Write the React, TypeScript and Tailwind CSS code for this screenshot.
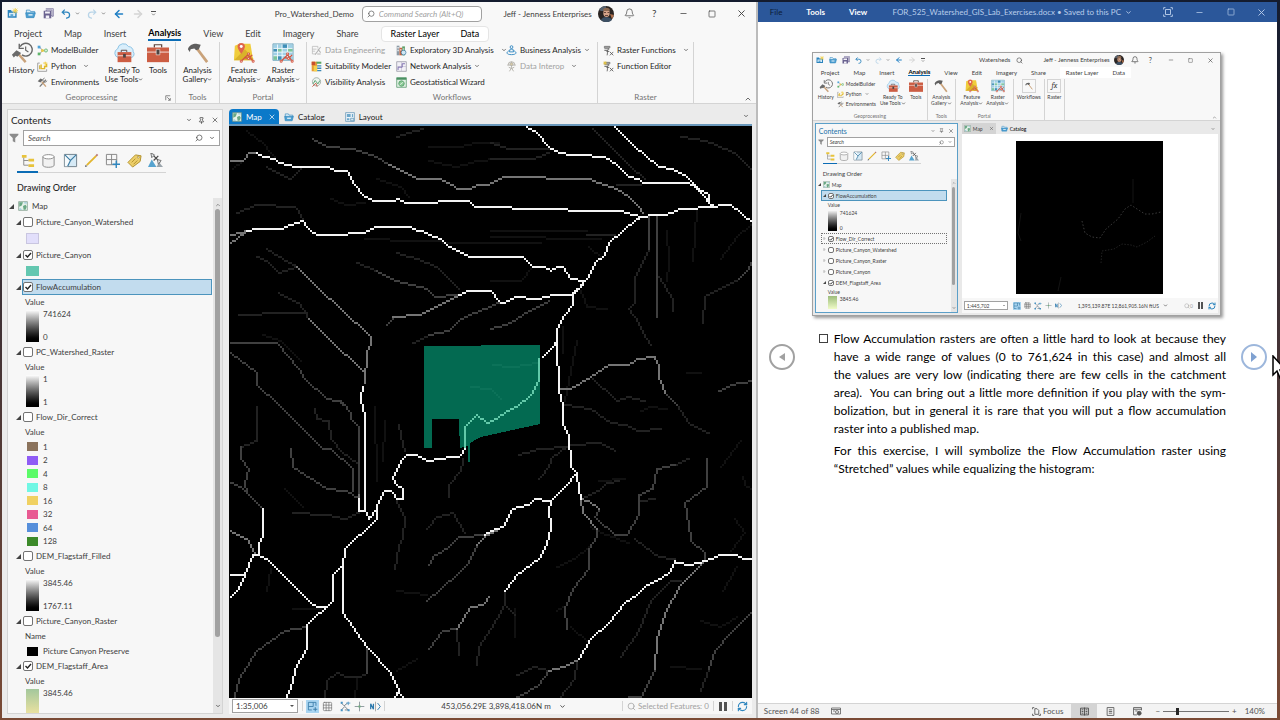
import type { ReactNode } from "react";
import {
  ArrowLeft,
  ArrowRight,
  Bell,
  ChevronDown,
  ChevronUp,
  Grid3x3,
  Minus,
  Pin,
  RefreshCw,
  Search,
  Square,
  X,
} from "lucide-react";

/* ---------- stream network ---------- */

const CELL = 2;

// walks a polyline over a 2px grid and returns one square per visited cell
function trace(line: string) {
  const pts = line.split(" ").map((p) => p.split(",").map((n) => Math.round(Number(n) / CELL)));
  const seen = new Set<string>();
  for (let i = 1; i < pts.length; i++) {
    const [x0, y0] = pts[i - 1];
    const [x1, y1] = pts[i];
    const steps = Math.max(Math.abs(x1 - x0), Math.abs(y1 - y0), 1);
    for (let s = 0; s <= steps; s++) {
      const x = Math.round(x0 + ((x1 - x0) * s) / steps);
      const y = Math.round(y0 + ((y1 - y0) * s) / steps);
      seen.add(`M${x * CELL} ${y * CELL}h2v2h-2z`);
    }
  }
  return [...seen].join("");
}

const STREAMS: { color: string; lines: string[] }[] = [
  {
    color: "#111111",
    lines: [
      "428,145 458,146 475,142 498,142",
      "428,160 455,165 475,160 498,158",
      "364,238 468,241 540,242",
      "490,229 585,229",
      "490,236 600,238",
      "588,245 600,255",
      "245,130 262,142 278,162",
      "231,168 243,158",
      "330,198 345,204 363,202",
      "375,177 400,186 407,196",
      "490,279 520,279 530,268",
      "261,334 280,340 300,360",
      "291,608 320,608",
      "283,488 301,505",
      "270,568 266,590",
      "395,670 415,658",
      "395,590 425,594",
      "598,480 623,478",
      "665,230 668,260 665,280",
      "720,258 735,235 752,221",
      "695,208 692,260",
      "720,465 740,440",
      "733,517 743,532 730,550",
      "741,475 744,483 750,488",
      "722,590 735,565",
      "563,400 575,340",
      "562,325 562,352",
      "580,290 585,306 605,307",
      "640,410 650,405 665,407",
      "627,542 605,533 590,525",
      "555,565 575,556 588,546",
      "555,610 565,603",
      "570,625 585,640",
      "355,678 354,697",
      "513,607 514,635",
      "700,620 720,625 735,615",
      "670,665 700,667",
      "685,371 700,372",
      "373,405 376,480",
      "383,420 382,460",
    ],
  },
  {
    color: "#222222",
    lines: [
      "255,255 265,260 278,272 296,266",
      "238,314 255,314 265,312 305,312",
      "278,292 298,302 308,318",
      "265,248 281,257 296,266",
      "235,212 245,208 255,203 293,205 298,210 301,219",
      "265,165 278,172 290,177 300,167",
      "395,135 408,131 421,128",
      "395,252 415,258 435,265 458,288",
      "356,262 375,269",
      "490,142 507,147 547,148",
      "490,158 532,158 547,152",
      "592,128 608,144 627,163 643,177",
      "680,135 695,138 710,142 733,152 750,168",
      "615,183 640,184",
      "585,233 613,233",
      "255,405 255,439 240,445",
      "291,512 328,513 343,518 358,512",
      "313,407 315,418 328,420 330,437 340,450 357,463",
      "398,423 399,435 403,450",
      "395,500 403,517 401,535 397,545 393,567",
      "461,458 460,470 448,483 447,495",
      "323,698 326,680 335,672 345,675 358,676 365,671",
      "426,528 435,515 451,512 463,532",
      "503,592 503,603 490,628 478,645 476,663",
      "503,603 514,613",
      "455,630 458,653",
      "548,670 533,665 515,673",
      "576,660 574,677 557,698",
      "680,580 670,580 650,600 638,630 620,655",
      "633,537 657,555 673,557",
      "708,667 700,690",
      "648,215 648,248 633,275 633,302 628,308 637,322 643,335 650,343",
      "657,275 672,298 672,310",
      "737,278 703,295 701,322",
      "590,376 615,400 627,395 643,400",
      "675,403 687,422 707,432",
      "563,403 590,407 610,422 623,423 637,430 660,427",
      "568,443 600,442 613,450",
      "567,443 550,458 548,466 538,478",
      "517,453 537,448 567,445",
      "580,497 597,490 605,481 618,479",
      "673,463 687,458",
      "640,500 653,497",
      "411,342 428,333",
    ],
  },
  {
    color: "#404040",
    lines: [
      "311,137 328,145 351,148 375,155 388,164",
      "229,342 275,342 298,367 302,375 325,397 338,400 345,405",
      "340,400 349,412 349,418 357,425 357,493",
      "230,352 255,372 256,383 278,403 321,447 330,448 351,468 351,490",
      "240,445 240,457 248,468 244,482 246,492 262,507",
      "229,482 240,486 253,500 262,507",
      "290,447 291,465 325,487 345,489 357,497",
      "375,269 395,279 425,287 433,296 455,294",
      "428,333 448,330 460,317 498,301",
      "490,328 510,322 527,309 547,300",
      "385,323 391,317",
      "233,695 238,677 255,650 283,630 305,626",
      "365,671 365,647",
      "428,563 431,555 448,545 458,535 485,534",
      "425,600 455,573 466,563 475,543",
      "428,647 441,630 455,627",
      "588,567 572,587 563,607 565,627",
      "703,559 703,552 689,540 688,523 683,502 705,485 705,457",
      "597,507 594,515 613,533 625,533 637,513 638,493 652,487 655,467 673,463",
      "596,528 596,535 588,547 588,567",
      "655,213 655,315",
      "648,215 648,248",
      "752,260 745,270 737,278",
      "752,380 730,383 717,390",
      "663,392 675,403",
      "653,667 640,695 627,695",
      "752,610 727,633 713,650 708,667",
      "548,670 537,683 513,697",
      "357,463 357,495",
    ],
  },
  {
    color: "#757575",
    lines: [
      "229,160 241,160 248,152 255,152",
      "229,233 245,229",
      "229,241 238,236 245,229",
      "388,164 401,170 418,177 438,178 451,183 456,188 468,188 475,183 488,183 498,178 502,176 543,176",
      "543,176 545,178 588,178 603,184 615,187 627,195 635,203 642,212",
      "296,266 318,287 338,305 369,335 369,342 365,352 363,382",
      "308,318 328,338 361,370",
      "391,315 418,313 435,305 458,293",
      "229,530 245,538 253,553",
      "475,543 485,533 498,527",
      "488,595 481,604 470,605 455,627",
      "577,658 562,665 548,670",
      "702,562 680,583 665,607 655,637 653,667",
      "580,497 588,500 597,507",
      "580,497 581,512 596,528",
      "557,387 570,387 590,376 608,364 628,363 635,358 653,356 658,365 657,375 663,392",
      "357,493 357,510",
    ],
  },
  {
    color: "#f4f4f4",
    lines: [
      "255,152 263,156 273,157 278,162 295,166 313,166 316,165 328,166 335,169 345,170 349,177 352,182 364,196 373,199 391,199 395,197 406,202 428,202 445,199 467,199 474,206 509,206 511,208 622,209 625,212 642,215",
      "245,229 253,227 280,227 290,223 293,221 301,219 306,226 311,231 318,233 345,233 348,231 361,231 375,225 410,225 415,229 421,229 428,234 440,237 445,243 467,255 521,255 531,266 543,266 549,269 555,266 561,266 569,277 583,280",
      "525,126 533,130 547,145 557,151 573,153 577,154 603,155 615,163 628,176 637,177 641,181 688,181 697,188 707,193 708,202 713,206",
      "613,126 632,143 657,166 672,168 683,174 690,180 702,193 708,202",
      "642,215 650,213 663,213 680,208 713,206 720,203 730,203 752,221",
      "642,215 635,218 607,242 603,254 594,262 585,278 572,293 572,304 561,315 556,327 556,342 557,388 561,405 561,423 567,433 570,465 575,471 577,489 580,497",
      "581,284 571,292",
      "458,293 465,289 489,289 498,300 501,302 514,296 538,297 552,294 572,294",
      "361,386 359,395 359,400 363,415 363,510",
      "357,497 358,510 363,510 368,517 374,510",
      "463,448 458,456 450,456 425,460 415,454 406,454 400,460 391,475 393,481 401,487 401,497 395,498 390,489 383,490 375,503 375,517 343,547 341,563 331,573 331,600 306,623 306,648 296,663 291,677 290,688 283,698",
      "341,563 341,611 355,632 366,645 388,670 396,683 398,692 403,697 411,697",
      "397,687 393,698",
      "262,507 262,533 257,542 257,553 265,557 308,600 316,605 325,605",
      "257,553 251,554 243,573 236,590 229,595",
      "229,573 243,573",
      "575,471 563,485 549,500 533,498 527,503 517,505 512,508 502,526 490,530 484,533",
      "549,500 547,507 549,527 545,542 537,557 515,573 503,590",
      "752,557 743,558 735,554 720,554 703,560 690,563 678,562 674,560 667,572 655,580 645,583 635,593 623,601 607,622 590,637 577,658",
      "541,356 553,343 556,338",
    ],
  },
];

function FlowMap() {
  return (
    <svg
      viewBox="229 126 523 572"
      preserveAspectRatio="xMidYMid slice"
      shapeRendering="crispEdges"
      className="h-full w-full bg-black"
      role="img"
      aria-label="Flow accumulation raster"
    >
      {STREAMS.map((group) => (
        <path key={group.color} d={group.lines.map(trace).join("")} fill={group.color} />
      ))}
      <path
        d="M424 346L540 345V424L481 437L470 443V462H468V446L460 448L459 419H432V448H424Z"
        fill="#036a51"
      />
      <path d={trace("492,363 512,365 538,362") + trace("470,385 490,387 500,397")} fill="#0c7259" />
      <path
        d={trace("463,446 464,425 475,414 485,421 498,416 505,410 518,404 530,393 537,377 538,357")}
        fill="#62c9a9"
      />
    </svg>
  );
}

/* ---------- icons ---------- */

type IconProps = { className?: string };

function Caret({ className = "size-[7px]" }: IconProps) {
  return <ChevronDown className={className} strokeWidth={3} />;
}

function NewProjectIcon({ className }: IconProps) {
  return (
    <svg viewBox="0 0 16 16" className={className}>
      <path d="M1 3h5l1 2h7v9H1z" fill="#2b83bd" />
      <path d="M3 7h9v5H3z" fill="#d7ecf8" />
      <path d="M5 9h4v3H5z" fill="#5ba5d3" />
      <path d="M12 0v8M8 4h8M9 1l6 6M15 1L9 7" stroke="#f1cf4a" strokeWidth="1.3" />
    </svg>
  );
}

function OpenIcon({ className }: IconProps) {
  return (
    <svg viewBox="0 0 16 16" className={className}>
      <path d="M2 3h5l1 2h6v3H2z" fill="#d9ecf7" stroke="#2f86be" />
      <path d="M1 7h14l-2 7H2z" fill="#4e9fd0" stroke="#2f86be" />
      <path d="M5 9h6v2H5z" fill="#e6f3fa" />
    </svg>
  );
}

function SaveIcon({ className }: IconProps) {
  return (
    <svg viewBox="0 0 16 16" className={className}>
      <path d="M4 1h11v11h-2M13 12V3H4z" fill="#e6e4ef" stroke="#6a6390" />
      <path d="M1 4h11v11H1z" fill="#6a6390" />
      <path d="M3 5h7v3H3zM4 11h5v4H4z" fill="#f3f2f8" />
    </svg>
  );
}

function UndoIcon({ className }: IconProps) {
  return (
    <svg viewBox="0 0 16 16" className={className} fill="none" stroke="currentColor" strokeWidth="2">
      <path d="M6 1L2 5l4 4M2 5h7a4.500 4.500 0 0 1 0 9.500H8" />
    </svg>
  );
}

function HistoryIcon({ className }: IconProps) {
  return (
    <svg viewBox="0 0 24 24" className={className} fill="none">
      <path d="M10 5a7 7 0 1 1 2 9" stroke="#666" strokeWidth="1.500" />
      <path d="M9 2v5h5" stroke="#666" strokeWidth="1.500" />
      <path d="M16 5v4l3 2" stroke="#666" strokeWidth="1.300" />
      <path d="M8 13l8 9" stroke="#c9a27a" strokeWidth="2.600" />
      <path d="M1 14l5-5 5 3-4 4-2-1-2 2z" fill="#6b6b6b" />
    </svg>
  );
}

function ModelIcon({ className }: IconProps) {
  return (
    <svg viewBox="0 0 16 16" className={className} fill="none">
      <path d="M4 3l4 5h3M4 13l4-5" stroke="#777" />
      <rect x="1" y="1" width="4" height="4" fill="#4fa3d8" />
      <rect x="1" y="11" width="4" height="4" fill="#61b56c" />
      <circle cx="8" cy="8" r="2.200" fill="#e8c94a" />
      <circle cx="13" cy="8" r="2.300" fill="#d6efd9" stroke="#4aa65a" />
    </svg>
  );
}

function PythonIcon({ className }: IconProps) {
  return (
    <svg viewBox="0 0 16 16" className={className} fill="none">
      <path d="M4 3H1v12h13v-3" stroke="#9a9a9a" strokeWidth="1.300" />
      <path d="M6 5v6h5V8h3V4" stroke="#e0b92c" strokeWidth="2" />
      <path d="M12 1v6M9 3h6" stroke="#f0cd45" strokeWidth="1.400" />
      <path d="M4 6v6" stroke="#c9a41e" strokeWidth="1.500" />
    </svg>
  );
}

function EnvironmentsIcon({ className }: IconProps) {
  return (
    <svg viewBox="0 0 16 16" className={className} fill="none">
      <path d="M4 14l9-10" stroke="#7a7a7a" strokeWidth="1.800" />
      <path d="M11 1.500a3 3 0 1 0 3.500 4" stroke="#7a7a7a" strokeWidth="1.400" />
      <path d="M7 7l6 7" stroke="#c9a27a" strokeWidth="2" />
      <path d="M1 6l4-4 4 2-4 4z" fill="#6b6b6b" />
    </svg>
  );
}

function ToolboxIcon({ className, cloud }: IconProps & { cloud?: boolean }) {
  return (
    <svg viewBox="0 0 24 24" className={className} fill="none">
      {cloud ? (
        <>
          <path
            d="M6 17a5 5 0 0 1-1-9.500A6.500 6.500 0 0 1 17 5a5 5 0 0 1 5 5.500A4 4 0 0 1 20 17z"
            fill="#d9eefb"
            stroke="#86bfe2"
          />
          <path d="M9 11V9h6v2" stroke="#5a4038" />
          <path d="M5 11h15v11H5z" fill="#cc5d43" />
          <path d="M5 15h15" stroke="#f7e9e5" />
          <path d="M11 13h3v4h-3z" fill="#4c4442" />
        </>
      ) : (
        <>
          <path d="M8 6V3h8v3" stroke="#5a4038" strokeWidth="1.300" />
          <path d="M0 6h24v16H0z" fill="#cc5d43" />
          <path d="M0 11h24" stroke="#f7e9e5" />
          <path d="M10 8h4v6h-4z" fill="#4c4442" stroke="#fff" strokeWidth=".6" />
        </>
      )}
    </svg>
  );
}

function HammerIcon({ className }: IconProps) {
  return (
    <svg viewBox="0 0 24 24" className={className} fill="none">
      <path d="M10 6l12 16" stroke="#c9a27a" strokeWidth="3" />
      <path d="M1 8c1-4 5-6 9-6l5 1-2 5-3 1-2-2-4 1-1 3z" fill="#5f5f5f" />
    </svg>
  );
}

function FeatureIcon({ className }: IconProps) {
  return (
    <svg viewBox="0 0 24 24" className={className} fill="none">
      <path d="M2 4l5-2h12l3 18H1z" fill="#f0cd3c" />
      <path d="M1 20L13 8l9 10v2z" fill="#d9b22a" />
      <path d="M9 1a4 4 0 0 1 4 4c0 3-4 8-4 8S5 8 5 5a4 4 0 0 1 4-4z" fill="#e0644c" />
      <circle cx="9" cy="5" r="1.600" fill="#fff" />
      <path d="M9 21l4-4 4 1 4-4M13 17l3-3 6 7" stroke="#d3543f" strokeWidth="1.400" />
      <path d="M8 20h2v2H8zM16 12h2v2h-2zM21 20h2v2h-2zM16 17h2v2h-2z" fill="#fff" stroke="#d3543f" />
    </svg>
  );
}

function RasterIcon({ className }: IconProps) {
  return (
    <svg viewBox="0 0 24 24" className={className} fill="none">
      <path d="M1 2h22v18H1z" fill="#9fd0e6" />
      <path d="M1 7h5v4H1zM11 2h6v5h-6zM6 15h5v5H6z" fill="#3f8fb8" />
      <path d="M6 7h5v4H6zM17 7h6v4h-6zM1 15h5v5H1z" fill="#7cc49b" />
      <path d="M1 7h22M1 11h22M1 15h22M6 2v18M11 2v18M17 2v18M1 2h22v18H1z" stroke="#f2fafd" />
      <path d="M1 2h22v18H1z" stroke="#5a97b0" strokeWidth=".8" />
      <path d="M10 21l4-4 4 1 4-4M14 17l3-3 5 7" stroke="#d3543f" strokeWidth="1.400" />
      <path d="M9 20h2v2H9zM16 12h2v2h-2zM21 20h2v2h-2zM17 17h2v2h-2z" fill="#fff" stroke="#d3543f" />
    </svg>
  );
}

function DataEngIcon({ className }: IconProps) {
  return (
    <svg viewBox="0 0 16 16" className={className} fill="none" stroke="#b5b5b5">
      <path d="M2 2h8v3M2 2v11h5M2 6h6M2 9h4" />
      <path d="M6 14l8-11M10 6l4 5M9 13h5" strokeWidth="1.500" />
    </svg>
  );
}

function SuitabilityIcon({ className }: IconProps) {
  return (
    <svg viewBox="0 0 16 16" className={className}>
      <path d="M1 1h8v14H1z" fill="#e79a35" />
      <path d="M1 1h5v5H1z" fill="#c8502f" />
      <path d="M4 7h5v8H4z" fill="#f2d24d" />
      <path d="M8 1h7v3H8z" fill="#59a65f" />
      <path d="M9 6h6v2H9zM9 9.500h6v2H9zM9 13h6v2H9z" fill="#3c88b5" />
    </svg>
  );
}

function VisibilityIcon({ className }: IconProps) {
  return (
    <svg viewBox="0 0 16 16" className={className} fill="none">
      <circle cx="8" cy="7" r="6" fill="#eef4f0" stroke="#8e9a94" />
      <path d="M3 10l3-5 4 5 3-5" stroke="#4c9c67" strokeWidth="1.300" />
      <path d="M2 14l5-5 2 5" stroke="#c8553f" strokeWidth="1.300" />
    </svg>
  );
}

function Explore3dIcon({ className }: IconProps) {
  return (
    <svg viewBox="0 0 16 16" className={className}>
      <path d="M1 1h4v14H1z" fill="#8d9aa5" />
      <path d="M5 4h4v11H5z" fill="#c7643f" />
      <path d="M9 2h4v13H9z" fill="#5f9e68" />
      <path d="M2 3h2v2H2zM2 7h2v2H2zM6 6h2v2H6zM10 5h2v2h-2z" fill="#eef2f5" />
      <circle cx="11" cy="11" r="3.500" fill="#cfe6f4" stroke="#38759d" />
    </svg>
  );
}

function NetworkIcon({ className }: IconProps) {
  return (
    <svg viewBox="0 0 16 16" className={className} fill="none">
      <path d="M1 1h14v14H1z" fill="#f2f0f7" stroke="#8d8d9a" />
      <path d="M1 8h14M8 1v14" stroke="#c2bfd0" />
      <path d="M3 13V9h6V4h4" stroke="#7364a8" strokeWidth="1.300" />
    </svg>
  );
}

function GeostatIcon({ className }: IconProps) {
  return (
    <svg viewBox="0 0 16 16" className={className} fill="none">
      <path d="M1 1h14v14H1z" fill="#e3f2e5" stroke="#4a9062" />
      <path d="M1 1h14v3H1z" fill="#4a9062" />
      <circle cx="8" cy="9.500" r="4" fill="#8ccb96" stroke="#3c8a56" />
      <path d="M5 12l6-5" stroke="#f5fbf6" />
    </svg>
  );
}

function BusinessIcon({ className }: IconProps) {
  return (
    <svg viewBox="0 0 16 16" className={className} fill="none" stroke="#3a8dc4" strokeWidth="1.400">
      <circle cx="8" cy="3" r="2" />
      <path d="M6 6h4l1 4H5zM5 8c-6 3-4 6 3 6s9-3 3-6" />
    </svg>
  );
}

function InteropIcon({ className }: IconProps) {
  return (
    <svg viewBox="0 0 16 16" className={className} fill="none" stroke="#b3b0a8" strokeWidth="1.300">
      <path d="M3 6a5 5 0 0 1 10 0M2 6h12M8 1v9M4 9l4 2 4-2M5 15l3-5 3 5" />
      <path d="M6 3h4v3H6z" fill="#ecd9a4" />
    </svg>
  );
}

function FxIcon({ className, spark }: IconProps & { spark?: boolean }) {
  return (
    <svg viewBox="0 0 16 16" className={className} fill="none">
      <path d="M2 2h8v2H2zM2 5.500h7M2 8h5" stroke="#6b6b6b" strokeWidth="1.300" />
      <path d="M9 6c-3-1-2 4-3 9M5 9.500h4M10 10l5 5M15 10l-5 5" stroke="#555" strokeWidth="1.200" />
      {spark && <path d="M3 0v6M0 3h6M1 1l4 4M5 1L1 5" stroke="#ecc93f" />}
    </svg>
  );
}

function MapIcon({ className }: IconProps) {
  return (
    <svg viewBox="0 0 16 16" className={className} fill="none">
      <path d="M1 1h14v14H1z" fill="#e7f2ea" stroke="#6d8f7c" />
      <path d="M2 2h6l-2 5-4 2zM8 8l4-2 2 3-2 5H9z" fill="#6aa884" />
      <path d="M10 2h4v2h-4zM3 11l3 2v1H2z" fill="#9cc8dd" />
    </svg>
  );
}

function LayoutIcon({ className }: IconProps) {
  return (
    <svg viewBox="0 0 16 16" className={className} fill="none">
      <path d="M1 1h14v14H1z" fill="#eef5fa" stroke="#4b87ad" />
      <path d="M3 3h6v5H3zM11 3h2v5h-2zM3 10h4v3H3z" fill="#6ea8cb" />
      <path d="M9 10h5v4H9z" fill="#d5e7f2" stroke="#4b87ad" />
    </svg>
  );
}

const LIST_ICONS: { name: string; art: ReactNode }[] = [
  {
    name: "List by drawing order",
    art: (
      <>
        <path d="M2 2h5v3H2zM9 6h6v3H9zM9 12h6v3H9z" fill="#e8c33b" />
        <path d="M4 5v8h5M4 8h5" stroke="#8a8a8a" />
      </>
    ),
  },
  {
    name: "List by source",
    art: (
      <>
        <path d="M2 4v9c0 3 12 3 12 0V4" fill="#f1f1f1" stroke="#8a8a8a" />
        <ellipse cx="8" cy="4" rx="6" ry="2.300" fill="#fff" stroke="#8a8a8a" />
      </>
    ),
  },
  {
    name: "List by selection",
    art: (
      <>
        <path d="M1.500 1.500h13v13h-13z" fill="#d6eaf6" stroke="#6f7f8a" />
        <path d="M2 2h4l2 5-3 7H2z" fill="#f7fbfd" />
        <path d="M2 2l6 6 6-6M8 8l-3 6" stroke="#3c7ca3" strokeWidth="1.200" />
      </>
    ),
  },
  {
    name: "List by editing",
    art: (
      <>
        <path d="M3 13L13 3" stroke="#e2b62f" strokeWidth="2" />
        <path d="M1 15l2.500-.8-1.700-1.700z" fill="#555" />
        <path d="M13 3l1.500-1.500" stroke="#b77777" strokeWidth="2" />
      </>
    ),
  },
  {
    name: "List by snapping",
    art: (
      <>
        <path d="M1.500 1.500h11v11h-11zM7 1.500v11M1.500 7h11" stroke="#858585" />
        <path d="M12 8v8M8 12h8" stroke="#2f86be" strokeWidth="1.500" />
      </>
    ),
  },
  {
    name: "List by labeling",
    art: (
      <>
        <path d="M1 10l8-8 6 1-1 6-8 6z" fill="#edcf6a" stroke="#b08f2a" />
        <circle cx="12" cy="4.500" r="1" fill="#fff" stroke="#8b701f" strokeWidth=".6" />
        <path d="M5 10l4-4M7 12l4-4" stroke="#b08f2a" />
      </>
    ),
  },
  {
    name: "List by perception imagery",
    art: (
      <>
        <path d="M0 15l4-8 5 8z" fill="#56a3cf" />
        <path d="M9 15l3-5 4 5z" fill="#9aa4ab" />
        <path d="M4 1l9 9M6 8l5-5" stroke="#4a4a4a" strokeWidth="1.300" />
        <path d="M3 0l4 2-3 3zM10 7l4 1-3 4z" fill="#e8ebed" stroke="#555" strokeWidth=".8" />
      </>
    ),
  },
];

function FunnelIcon({ className }: IconProps) {
  return (
    <svg viewBox="0 0 16 16" className={className}>
      <path d="M1 1h14v2L10 8v7l-4-2V8L1 3z" fill="#8b8b8b" />
    </svg>
  );
}

function Avatar({ className }: IconProps) {
  return (
    <svg viewBox="0 0 16 16" className={className} role="img" aria-label="Account">
      <circle cx="8" cy="8" r="8" fill="#2a2422" />
      <path d="M1 4a8 8 0 0 1 7-4v5H3z" fill="#57616e" />
      <ellipse cx="8.500" cy="7" rx="3.200" ry="4" fill="#d6a489" />
      <path d="M5 4c1-3 6-3 7 0l-1 1H6z" fill="#8e6a52" />
      <path d="M3 14c1-4 9-4 11 0a8 8 0 0 1-11 0z" fill="#3c4f63" />
      <path d="M12 8l4 1-2 4z" fill="#b0714d" />
      <path d="M6 6.500h2M9.500 6.500h2M7 9.500h3" stroke="#4a3028" strokeWidth=".8" />
    </svg>
  );
}

function Triangle({ className = "size-[5px]", open = true }: IconProps & { open?: boolean }) {
  return (
    <svg viewBox="0 0 8 8" className={`shrink-0 ${className}`}>
      {open ? <path d="M8 0v8H0z" fill="#444" /> : <path d="M2 1l4 3-4 3z" fill="none" stroke="#777" />}
    </svg>
  );
}

function StatusIcon({ kind, className }: IconProps & { kind: string }) {
  return (
    <svg viewBox="0 0 16 16" className={className} fill="none">
      {kind === "add" && (
        <>
          <path d="M2 2h7v6H2zM2 8v5h5M9 2h4v5" stroke="#3578a5" strokeWidth="1.200" />
          <path d="M12 9v6M9 12h6" stroke="#3578a5" strokeWidth="1.300" />
        </>
      )}
      {kind === "snap" && (
        <>
          <path d="M2 3l4 4 5-4M2 13l5-5 5 5M7 13h5" stroke="#5e6f7a" strokeWidth="1.200" />
          <path d="M1 1h3v3H1zM1 12h3v3H1zM11 12h3v3h-3z" fill="#4793c4" />
          <path d="M12 1v5M9 3h6" stroke="#4793c4" strokeWidth="1.200" />
        </>
      )}
      {kind === "cross" && (
        <>
          <path d="M8 1v14M1 8h14" stroke="#7d8a90" strokeWidth="1.200" />
          <path d="M6.500 6.500h3v3h-3z" fill="#6fae7c" />
        </>
      )}
      {kind === "north" && (
        <>
          <path d="M1 12V4l4 8V4" stroke="#2b79ad" strokeWidth="1.800" />
          <path d="M8 1v14" stroke="#8a8a8a" />
          <path d="M11 3l4 5-4 5" stroke="#2b79ad" strokeWidth="1.300" />
        </>
      )}
    </svg>
  );
}

/* ---------- shared pieces ---------- */

function QuickAccess({ small }: { small?: boolean }) {
  const icon = small ? "size-2" : "size-[11px]";
  const caret = small ? "size-1" : "size-[5px]";
  return (
    <div className={`flex shrink-0 items-center ${small ? "gap-[5px]" : "gap-[7px]"}`}>
      <button aria-label="New project">
        <NewProjectIcon className={icon} />
      </button>
      <button aria-label="Open">
        <OpenIcon className={icon} />
      </button>
      <button aria-label="Save">
        <SaveIcon className={icon} />
      </button>
      <button aria-label="Undo" className="flex items-center gap-1 text-[#2f86be]">
        <UndoIcon className={small ? "size-[7px]" : "size-[10px]"} />
        <Caret className={`${caret} text-neutral-600`} />
      </button>
      <button aria-label="Redo" className="flex items-center gap-1 text-[#b9d5e8]">
        <UndoIcon className={`-scale-x-100 ${small ? "size-[7px]" : "size-[10px]"}`} />
        <Caret className={`${caret} text-neutral-600`} />
      </button>
      <button aria-label="Back" className="text-[#1f7fc4]">
        <ArrowLeft className={small ? "size-2" : "size-3"} strokeWidth={3} />
      </button>
      <button aria-label="Forward" className="text-neutral-300">
        <ArrowRight className={small ? "size-2" : "size-3"} strokeWidth={3} />
      </button>
      <button aria-label="Customize" className="flex flex-col items-center text-neutral-600">
        <span className={`h-px bg-neutral-600 ${small ? "w-1" : "w-[5px]"}`} />
        <Caret className={caret} />
      </button>
    </div>
  );
}

function Check({ id, checked, small }: { id: string; checked?: boolean; small?: boolean }) {
  return (
    <span className="relative flex shrink-0">
      <input
        id={id}
        type="checkbox"
        defaultChecked={checked}
        className={`peer appearance-none rounded-xs border border-neutral-500 bg-white ${small ? "size-[6px]" : "size-[10px]"}`}
      />
      <svg
        viewBox="0 0 10 10"
        className="pointer-events-none absolute inset-0 hidden size-full peer-checked:block"
        fill="none"
        stroke="#222"
        strokeWidth="1.400"
      >
        <path d="M2.500 5l2 2 3.500-4" />
      </svg>
    </span>
  );
}

function Big({ icon, lines, caret, className }: { icon: ReactNode; lines: string[]; caret?: boolean; className: string }) {
  return (
    <button className={`flex shrink-0 flex-col items-center whitespace-nowrap ${className}`}>
      {icon}
      {lines.map((line, i) => (
        <span key={line} className="flex items-center">
          {line}
          {caret && i === lines.length - 1 && <Caret className="size-[5px]" />}
        </span>
      ))}
    </button>
  );
}

function Mini({ icon, label, caret, dim, gap }: { icon: ReactNode; label: string; caret?: boolean; dim?: boolean; gap?: boolean }) {
  return (
    <button className={`flex h-4 items-center gap-[3px] whitespace-nowrap ${dim ? "text-neutral-400" : ""}`}>
      {icon}
      {label}
      {caret && <Caret className={`size-[6px] text-neutral-600 ${gap ? "ml-1" : ""}`} />}
    </button>
  );
}

function Group({ label, className, launcher, children }: { label: string; className: string; launcher?: boolean; children: ReactNode }) {
  return (
    <section className={`flex shrink-0 flex-col border-r border-neutral-300 ${className}`}>
      <div className="flex h-[50px]">{children}</div>
      <div className="relative text-center leading-[11px] text-neutral-500">
        {label}
        {launcher && (
          <svg viewBox="0 0 8 8" className="absolute right-1 bottom-[2px] size-[6px]" fill="none" stroke="#666">
            <path d="M1 7V1h6M3 3l4 4M7 4v3H4" />
          </svg>
        )}
      </div>
    </section>
  );
}

const TABS = ["Project", "Map", "Insert", "Analysis", "View", "Edit", "Imagery", "Share"];

/* ---------- ArcGIS window ---------- */

function TitleBar() {
  return (
    <header className="flex h-[23px] items-center pl-[5px] text-[8px] text-neutral-700">
      <QuickAccess />
      <span className="ml-auto">Pro_Watershed_Demo</span>
      <label className="ml-2 flex h-4 w-[120px] shrink-0 items-center gap-1 rounded-sm border border-neutral-400 bg-white pl-1">
        <Search className="size-2 shrink-0 -scale-x-100 text-neutral-600" />
        <input
          aria-label="Command Search"
          placeholder="Command Search (Alt+Q)"
          className="w-full min-w-0 italic outline-none placeholder:text-neutral-400"
        />
      </label>
      <span className="w-[116px] shrink-0 pr-[6px] text-right">Jeff - Jenness Enterprises</span>
      <Avatar className="size-4 shrink-0" />
      <button aria-label="Notifications" className="ml-[3px] flex w-[25px] justify-center">
        <Bell className="size-[11px]" strokeWidth={1.500} />
      </button>
      <button aria-label="Help" className="w-[25px] text-[10px]">
        ?
      </button>
      <button aria-label="Minimize" className="ml-[2px] flex w-[29px] justify-center">
        <Minus className="size-[9px]" />
      </button>
      <button aria-label="Maximize" className="flex w-[29px] justify-center">
        <Square className="size-2" />
      </button>
      <button aria-label="Close" className="flex w-[29px] justify-center">
        <X className="size-[11px]" />
      </button>
    </header>
  );
}

function RibbonTabs() {
  return (
    <nav className="flex h-[17px] items-center gap-[22px] pl-3 text-[9px] text-neutral-700">
      {TABS.map((tab) => (
        <button
          key={tab}
          className={
            tab === "Analysis" ? "border-b-2 border-[#0b6cb5] leading-[13px] font-bold text-black" : "leading-[15px]"
          }
        >
          {tab}
        </button>
      ))}
      <div className="flex h-4 items-center gap-[21px] rounded-sm border border-neutral-200 bg-white px-[9px] text-black">
        <button>Raster Layer</button>
        <button>Data</button>
      </div>
    </nav>
  );
}

function Ribbon() {
  const mini = "size-[11px] shrink-0";
  const big = "mb-[2px] size-[22px]";
  return (
    <div className="flex h-[62px] border-b border-neutral-300 pl-[6px] text-[8px] leading-[9px] text-neutral-800">
      <Group label="Geoprocessing" className="w-[168px]" launcher>
        <Big icon={<HistoryIcon className={big} />} lines={["History"]} className="w-[27px]" />
        <div className="ml-[2px] w-[66px]">
          <Mini icon={<ModelIcon className={mini} />} label="ModelBuilder" />
          <Mini icon={<PythonIcon className={mini} />} label="Python" caret gap />
          <Mini icon={<EnvironmentsIcon className={mini} />} label="Environments" />
        </div>
        <Big icon={<ToolboxIcon cloud className={big} />} lines={["Ready To", "Use Tools"]} caret className="w-[42px]" />
        <Big icon={<ToolboxIcon className={big} />} lines={["Tools"]} className="w-[26px]" />
      </Group>
      <Group label="Tools" className="w-11">
        <Big icon={<HammerIcon className={big} />} lines={["Analysis", "Gallery"]} caret className="w-full" />
      </Group>
      <Group label="Portal" className="w-[87px]">
        <Big icon={<FeatureIcon className={big} />} lines={["Feature", "Analysis"]} caret className="ml-1 w-10" />
        <Big icon={<RasterIcon className={big} />} lines={["Raster", "Analysis"]} caret className="w-[38px]" />
      </Group>
      <Group label="Workflows" className="w-[291px]">
        <div className="ml-1 w-[85px]">
          <Mini icon={<DataEngIcon className={mini} />} label="Data Engineering" dim />
          <Mini icon={<SuitabilityIcon className={mini} />} label="Suitability Modeler" />
          <Mini icon={<VisibilityIcon className={mini} />} label="Visibility Analysis" />
        </div>
        <div className="w-[110px]">
          <Mini icon={<Explore3dIcon className={mini} />} label="Exploratory 3D Analysis" caret gap />
          <Mini icon={<NetworkIcon className={mini} />} label="Network Analysis" caret />
          <Mini icon={<GeostatIcon className={mini} />} label="Geostatistical Wizard" />
        </div>
        <div>
          <Mini icon={<BusinessIcon className={mini} />} label="Business Analysis" caret />
          <Mini icon={<InteropIcon className={mini} />} label="Data Interop" caret dim gap />
        </div>
      </Group>
      <Group label="Raster" className="w-24">
        <div className="ml-[5px]">
          <Mini icon={<FxIcon className={mini} />} label="Raster Functions" caret gap />
          <Mini icon={<FxIcon spark className={mini} />} label="Function Editor" />
        </div>
      </Group>
      <button aria-label="Collapse ribbon" className="mr-1 ml-auto self-end">
        <ChevronUp className="size-2" />
      </button>
    </div>
  );
}

function LayerRow({ id, label, checked, selected }: { id: string; label: string; checked?: boolean; selected?: boolean }) {
  return (
    <div className="flex h-4 items-center gap-px pl-2">
      <Triangle />
      <div
        className={`flex h-full flex-1 items-center gap-[3px] border ${selected ? "border-[#4c94bd] bg-[#c2dcee]" : "border-transparent"}`}
      >
        <Check id={id} checked={checked} />
        <label htmlFor={id}>{label}</label>
      </div>
    </div>
  );
}

function Heading({ children }: { children: ReactNode }) {
  return <div className="h-[15px] pl-[17px] leading-[15px]">{children}</div>;
}

function Ramp({ top, bottom, className = "from-white to-black" }: { top: string; bottom?: string; className?: string }) {
  return (
    <div className="flex h-[34px] gap-1 pl-[18px]">
      <span className={`h-8 w-[13px] bg-linear-to-b ${className}`} />
      <div className="flex h-8 flex-col justify-between leading-[9px]">
        <span>{top}</span>
        <span>{bottom}</span>
      </div>
    </div>
  );
}

const DIRECTIONS = [
  { value: "1", swatch: "bg-[#8b735c]" },
  { value: "2", swatch: "bg-[#8f5cf5]" },
  { value: "4", swatch: "bg-[#5bfb68]" },
  { value: "8", swatch: "bg-[#70f7e4]" },
  { value: "16", swatch: "bg-[#f0d162]" },
  { value: "32", swatch: "bg-[#e85a92]" },
  { value: "64", swatch: "bg-[#568fdb]" },
  { value: "128", swatch: "bg-[#3c8a2a]" },
];

function ContentsPane() {
  return (
    <aside className="flex w-[216px] shrink-0 flex-col border border-neutral-300 bg-[#f7f7f7] text-[8px] text-neutral-700">
      <div className="flex h-5 items-center gap-[6px] pr-[3px] pl-[3px]">
        <h2 className="mr-auto text-[10px] text-neutral-800">Contents</h2>
        <Caret className="size-[6px]" />
        <Pin className="size-[7px]" strokeWidth={2.500} />
        <X className="size-2" />
      </div>
      <div className="flex items-center gap-1 pr-[2px] pl-px">
        <FunnelIcon className="size-[10px]" />
        <label className="flex h-4 flex-1 items-center gap-[6px] border border-neutral-400 bg-white px-1">
          <input
            aria-label="Search layers"
            placeholder="Search"
            className="w-full min-w-0 flex-1 italic outline-none placeholder:text-neutral-600"
          />
          <Search className="size-2 -scale-x-100" />
          <Caret className="size-[6px]" />
        </label>
      </div>
      <div className="mt-[3px] ml-[9px] flex h-6 w-[149px] border-b border-neutral-300">
        {LIST_ICONS.map((item, i) => (
          <button
            key={item.name}
            aria-label={item.name}
            className={`-mb-px flex flex-1 items-center justify-center border-b-2 ${i === 0 ? "border-[#0b6cb5]" : "border-transparent"}`}
          >
            <svg viewBox="0 0 16 16" className="size-[15px]" fill="none">
              {item.art}
            </svg>
          </button>
        ))}
      </div>
      <h3 className="mt-[7px] mb-[2px] pl-[9px] text-[9px] leading-4 font-medium text-neutral-800">Drawing Order</h3>
      <div className="flex min-h-0 flex-1">
        <div className="min-w-0 flex-1 overflow-hidden pr-px">
          <div className="flex h-4 items-center gap-1 pl-px">
            <Triangle />
            <MapIcon className="size-[10px]" />
            Map
          </div>
          <LayerRow id="watershed" label="Picture_Canyon_Watershed" />
          <div className="flex h-[17px] items-center pl-[18px]">
            <span className="h-[11px] w-[13px] border border-[#c9c6e0] bg-[#e2dffb]" />
          </div>
          <LayerRow id="canyon" label="Picture_Canyon" checked />
          <div className="flex h-4 items-center pl-[18px]">
            <span className="h-[10px] w-[13px] bg-[#63c7b0]" />
          </div>
          <LayerRow id="flowacc" label="FlowAccumulation" checked selected />
          <Heading>Value</Heading>
          <Ramp top="741624" bottom="0" />
          <LayerRow id="pcraster" label="PC_Watershed_Raster" />
          <Heading>Value</Heading>
          <Ramp top="1" bottom="1" />
          <LayerRow id="flowdir" label="Flow_Dir_Correct" />
          <Heading>Value</Heading>
          <ul className="grid h-[108px] auto-rows-fr">
            {DIRECTIONS.map((d) => (
              <li key={d.value} className="flex items-center gap-[5px] pl-[19px]">
                <span className={`h-[9px] w-[11px] ${d.swatch}`} />
                {d.value}
              </li>
            ))}
          </ul>
          <LayerRow id="demfilled" label="DEM_Flagstaff_Filled" />
          <Heading>Value</Heading>
          <Ramp top="3845.46" bottom="1767.11" />
          <LayerRow id="canyonraster" label="Picture_Canyon_Raster" />
          <Heading>Name</Heading>
          <div className="flex h-[14px] items-center gap-[5px] pl-[19px]">
            <span className="h-[9px] w-[11px] bg-black" />
            Picture Canyon Preserve
          </div>
          <LayerRow id="demarea" label="DEM_Flagstaff_Area" checked />
          <Heading>Value</Heading>
          <Ramp top="3845.46" className="from-[#a3c79c] to-[#ffe9a0]" />
        </div>
        <div className="flex w-[9px] flex-col items-center bg-neutral-200 py-1">
          <ChevronUp className="size-[6px] shrink-0" />
          <span className="mt-px h-[428px] w-[5px] shrink rounded-full bg-neutral-400" />
          <Caret className="mt-auto size-[6px] shrink-0" />
        </div>
      </div>
    </aside>
  );
}

function Divider() {
  return <span className="h-[10px] w-px shrink-0 bg-neutral-300" />;
}

function MapPane() {
  return (
    <main className="flex min-w-0 flex-1 flex-col text-[8px] text-neutral-700">
      <div className="flex h-[17px] shrink-0 items-end border-b-2 border-[#6a98bb]">
        <button className="flex h-full w-[50px] items-center gap-1 rounded-t-sm bg-[#0b79c9] pl-[3px] text-white">
          <MapIcon className="size-[10px]" />
          Map
          <X className="ml-[2px] size-2" />
        </button>
        <button className="flex h-full items-center gap-1 pl-[5px] text-neutral-900">
          <OpenIcon className="size-[10px]" />
          Catalog
        </button>
        <button className="ml-5 flex h-full items-center gap-1 text-neutral-900">
          <LayoutIcon className="size-[10px]" />
          Layout
        </button>
        <Caret className="mr-[3px] mb-[5px] ml-auto size-[6px]" />
      </div>
      <div className="min-h-0 flex-1">
        <FlowMap />
      </div>
      <footer className="flex h-4 shrink-0 items-center bg-[#f7f7f7] pr-1 pl-[3px]">
        <label className="relative mr-1 flex w-[66px] items-center">
          <select aria-label="Map scale" className="h-[14px] w-full appearance-none border border-neutral-400 bg-white pl-[3px]">
            <option>1:35,006</option>
          </select>
          <span className="pointer-events-none absolute right-1 border-x-2 border-t-2 border-x-transparent border-t-neutral-600" />
        </label>
        <Divider />
        <div className="mx-[3px] flex items-center gap-[3px]">
          <button aria-label="Add" className="bg-[#a9d4f0] p-[1px]">
            <StatusIcon kind="add" className="size-[11px]" />
          </button>
          <button aria-label="Grid">
            <Grid3x3 className="size-[11px] text-neutral-500" strokeWidth={1.500} />
          </button>
          <button aria-label="Snapping" className="ml-1">
            <StatusIcon kind="snap" className="size-[11px]" />
          </button>
          <button aria-label="Crosshair">
            <StatusIcon kind="cross" className="size-[11px]" />
          </button>
          <button aria-label="Corrections" className="ml-[2px]">
            <StatusIcon kind="north" className="size-[11px]" />
          </button>
        </div>
        <Divider />
        <button className="mx-auto flex items-center gap-2 whitespace-nowrap">
          453,056.29E 3,898,418.06N m
          <Caret className="size-[7px]" />
        </button>
        <Divider />
        <span className="mx-1 flex items-center gap-[2px] whitespace-nowrap text-neutral-400">
          <Search className="size-[9px]" />
          Selected Features: 0
        </span>
        <Divider />
        <button aria-label="Pause drawing" className="mx-[5px] flex gap-[2px]">
          <span className="h-[9px] w-[3px] bg-neutral-600" />
          <span className="h-[9px] w-[3px] bg-neutral-600" />
        </button>
        <Divider />
        <button aria-label="Refresh" className="ml-1 text-[#2f86be]">
          <RefreshCw className="size-[11px]" strokeWidth={2.500} />
        </button>
      </footer>
    </main>
  );
}

function ArcGisWindow() {
  return (
    <div className="flex min-w-0 flex-[755] flex-col border-r-2 border-[#bcbcbc] bg-[#ebebeb] font-[Lato,'Open_Sans',sans-serif]">
      <div className="shrink-0 bg-[#f8f8f8]">
        <TitleBar />
        <RibbonTabs />
        <Ribbon />
      </div>
      <div className="flex min-h-0 flex-1 gap-[6px] px-1 pt-[5px] pb-1 pl-[5px]">
        <ContentsPane />
        <MapPane />
      </div>
    </div>
  );
}

/* ---------- Word window ---------- */

function FigureRow({ id, label, checked, open, className = "" }: { id: string; label: string; checked?: boolean; open?: boolean; className?: string }) {
  return (
    <div className={`mr-1 ml-[5px] flex h-[11px] shrink-0 items-center gap-[2px] border pl-px ${className || "border-transparent"}`}>
      <Triangle className="size-[3px]" open={open} />
      <Check id={id} checked={checked} small />
      <label htmlFor={id}>{label}</label>
    </div>
  );
}

function FigureGroup({ label, className, children }: { label?: string; className: string; children: ReactNode }) {
  return (
    <div className={`flex shrink-0 flex-col border-r border-neutral-300 ${className}`}>
      <div className="flex h-[34px]">{children}</div>
      <div className="text-center leading-[7px] text-neutral-500">{label}</div>
    </div>
  );
}

function Figure() {
  const big = "mb-[1px] size-[14px]";
  const mini = "size-[7px] shrink-0";
  const line = "flex h-[10px] items-center gap-[2px] whitespace-nowrap";
  return (
    <figure className="flex h-[264px] w-[409px] flex-col border border-neutral-400 bg-[#e9e9e9] text-[5px] leading-[6px] text-neutral-700 shadow-[2px_2px_3px_#999]">
      <div className="shrink-0 border-b border-neutral-300 bg-[#f8f8f8]">
        <div className="flex h-[14px] items-center pl-[3px] text-[6px]">
          <QuickAccess small />
          <span className="ml-auto">Watersheds</span>
          <Search className="ml-[6px] size-[7px]" />
          <span className="ml-5">Jeff - Jenness Enterprises</span>
          <Avatar className="ml-1 size-[10px]" />
          <Bell className="ml-[7px] size-2" />
          <span className="ml-[10px] text-[7px]">?</span>
          <Minus className="ml-4 size-[6px]" />
          <Square className="ml-[14px] size-[5px]" />
          <X className="mr-[6px] ml-[14px] size-[7px]" />
        </div>
        <div className="flex h-[11px] items-center gap-[14px] pl-2 text-[6px]">
          {TABS.map((tab) => (
            <span key={tab} className={tab === "Analysis" ? "border-b border-[#0b6cb5] font-bold text-black" : ""}>
              {tab}
            </span>
          ))}
          <span className="flex h-[11px] items-center gap-[14px] bg-white px-[6px]">
            <span>Raster Layer</span>
            <span>Data</span>
          </span>
        </div>
        <div className="flex h-[42px] pt-px">
          <FigureGroup label="Geoprocessing" className="w-[115px]">
            <Big icon={<HistoryIcon className={big} />} lines={["History"]} className="ml-1 w-[18px]" />
            <div className="ml-[2px] w-[42px]">
              <div className={line}>
                <ModelIcon className={mini} />
                ModelBuilder
              </div>
              <div className={line}>
                <PythonIcon className={mini} />
                Python
                <Caret className="ml-px size-1" />
              </div>
              <div className={line}>
                <EnvironmentsIcon className={mini} />
                Environments
              </div>
            </div>
            <Big icon={<ToolboxIcon cloud className={big} />} lines={["Ready To", "Use Tools"]} caret className="w-[28px]" />
            <Big icon={<ToolboxIcon className={big} />} lines={["Tools"]} className="w-[18px]" />
          </FigureGroup>
          <FigureGroup label="Tools" className="w-7">
            <Big icon={<HammerIcon className={big} />} lines={["Analysis", "Gallery"]} caret className="w-full" />
          </FigureGroup>
          <FigureGroup label="Portal" className="w-[58px]">
            <Big icon={<FeatureIcon className={big} />} lines={["Feature", "Analysis"]} caret className="ml-[3px] w-[26px]" />
            <Big icon={<RasterIcon className={big} />} lines={["Raster", "Analysis"]} caret className="w-[26px]" />
          </FigureGroup>
          <FigureGroup className="w-[31px]">
            <Big icon={<HammerIcon className={`${big} border border-neutral-300 p-[2px]`} />} lines={["Workflows"]} className="w-full" />
          </FigureGroup>
          <FigureGroup className="w-[20px]">
            <Big
              icon={
                <span className={`${big} border border-neutral-300 text-center font-serif text-[8px] leading-[12px] italic`}>
                  fx
                </span>
              }
              lines={["Raster"]}
              className="w-full"
            />
          </FigureGroup>
          <ChevronUp className="mr-[3px] ml-auto size-[5px] self-end" />
        </div>
      </div>

      <div className="flex min-h-0 flex-1 gap-1 p-[2px]">
        <div className="flex w-[143px] shrink-0 flex-col border border-[#5b9fc8] bg-[#f7f7f7]">
          <div className="flex h-[13px] shrink-0 items-center gap-1 px-[3px] text-[7px]">
            <span className="mr-auto text-[#2272a8]">Contents</span>
            <Caret className="size-1" />
            <Pin className="size-[5px]" />
            <X className="size-[6px]" />
          </div>
          <div className="flex shrink-0 items-center gap-[3px] px-[2px]">
            <FunnelIcon className="size-[6px]" />
            <div className="flex h-[10px] flex-1 items-center gap-1 border border-neutral-400 bg-white px-[2px]">
              <span className="mr-auto italic">Search</span>
              <Search className="size-[5px] -scale-x-100" />
              <Caret className="size-1" />
            </div>
          </div>
          <div className="mt-px ml-[7px] flex h-[16px] w-[98px] shrink-0 border-b border-neutral-300">
            {LIST_ICONS.map((item, i) => (
              <span
                key={item.name}
                className={`-mb-px flex flex-1 items-center justify-center border-b ${i === 0 ? "border-[#0b6cb5]" : "border-transparent"}`}
              >
                <svg viewBox="0 0 16 16" className="size-[10px]" fill="none">
                  {item.art}
                </svg>
              </span>
            ))}
          </div>
          <div className="mt-[5px] shrink-0 pl-[7px] text-[6px] leading-[10px]">Drawing Order</div>
          <div className="flex min-h-0 flex-1">
            <div className="flex min-w-0 flex-1 flex-col overflow-hidden">
              <div className="flex h-[11px] shrink-0 items-center gap-[2px] pl-[2px]">
                <Triangle className="size-[3px]" />
                <MapIcon className="size-[7px]" />
                Map
              </div>
              <FigureRow id="fig-acc" label="FlowAccumulation" checked open className="border-[#4c94bd] bg-[#c2dcee]" />
              <div className="shrink-0 pl-3 leading-[9px]">Value</div>
              <div className="flex h-[23px] shrink-0 gap-[3px] pl-3">
                <span className="h-[21px] w-[9px] bg-linear-to-b from-white to-black" />
                <div className="flex h-[21px] flex-col justify-between">
                  <span>741624</span>
                  <span>0</span>
                </div>
              </div>
              <FigureRow id="fig-dir" label="Flow_Dir_Correct" checked open={false} className="border-dotted border-neutral-500" />
              <FigureRow id="fig-ws" label="Picture_Canyon_Watershed" open={false} />
              <FigureRow id="fig-ras" label="Picture_Canyon_Raster" open={false} />
              <FigureRow id="fig-can" label="Picture_Canyon" open={false} />
              <FigureRow id="fig-dem" label="DEM_Flagstaff_Area" checked open />
              <div className="shrink-0 pl-3 leading-[8px]">Value</div>
              <div className="flex shrink-0 gap-[3px] pl-3">
                <span className="h-[13px] w-[9px] bg-linear-to-b from-[#9dbd7c] to-[#f0fbc8]" />
                3845.46
              </div>
            </div>
            <div className="flex w-[6px] flex-col items-center bg-neutral-200 py-[2px]">
              <ChevronUp className="size-1" />
              <span className="mt-[2px] h-[98px] w-[3px] rounded-full bg-neutral-400" />
              <Caret className="mt-auto size-1" />
            </div>
          </div>
        </div>
        <div className="flex min-w-0 flex-1 flex-col">
          <div className="flex h-[11px] shrink-0 items-center gap-[5px]">
            <span className="flex h-full items-center gap-[2px] bg-neutral-300 px-[2px]">
              <MapIcon className="size-[7px]" />
              Map
              <X className="ml-1 size-[5px]" />
            </span>
            <OpenIcon className="size-[7px]" />
            <span className="-ml-[3px] text-black">Catalog</span>
            <Caret className="mr-[3px] ml-auto size-1" />
          </div>
          <div className="flex min-h-0 flex-1 justify-center bg-white pt-[7px]">
            <svg viewBox="0 0 147 153" className="h-[153px] w-[147px] bg-black" fill="none" stroke="#555" strokeWidth=".7">
              <path d="M66 80l3 12 7 4 8 1 6-9 12-10 7-10 6-4 6 4 8 5h7l9-2" strokeDasharray="1.500 2" />
              <path d="M85 122l1-12 12-2 8-5 9 1 6 2 10-5 8-6" stroke="#2f2f2f" strokeDasharray="1.500 1.500" />
              <path d="M117 62V38M5 100l-3-8 3-20M42 150l3-14" stroke="#1c1c1c" />
            </svg>
          </div>
          <div className="flex h-[15px] shrink-0 items-center gap-[5px] bg-[#f7f7f7] px-[2px]">
            <span className="flex h-[9px] w-11 items-center justify-between border border-neutral-400 bg-white px-[2px]">
              1:445,702
              <span className="border-x-1 border-t-1 border-x-transparent border-t-neutral-600" />
            </span>
            <StatusIcon kind="add" className="size-2 bg-[#a9d4f0]" />
            <Grid3x3 className="-ml-[2px] size-[7px] text-neutral-500" />
            <StatusIcon kind="snap" className="-ml-[2px] size-2" />
            <StatusIcon kind="cross" className="-ml-[2px] size-[7px]" />
            <StatusIcon kind="north" className="-ml-[2px] size-[7px]" />
            <span className="mx-auto flex items-center gap-1 whitespace-nowrap">
              1,395,139.87E 12,861,905.16N ftUS
              <Caret className="size-[5px]" />
            </span>
            <span className="flex items-center text-neutral-400">
              <Search className="size-[6px]" />0
            </span>
            <span className="flex gap-[1px]">
              <span className="h-[7px] w-[2px] bg-neutral-600" />
              <span className="h-[7px] w-[2px] bg-neutral-600" />
            </span>
            <RefreshCw className="size-2 text-[#2f86be]" strokeWidth={3} />
          </div>
        </div>
      </div>
    </figure>
  );
}

function Paragraph({ lines }: { lines: string[] }) {
  return (
    <p>
      {lines.map((line, i) => (
        <span key={line} className={`block ${i < lines.length - 1 ? "[text-align-last:justify]" : ""}`}>
          {line}
        </span>
      ))}
    </p>
  );
}

const ACCUMULATION = [
  "Flow Accumulation rasters are often a little hard to look at because they",
  "have a wide range of values (0 to 761,624 in this case) and almost all",
  "the values are very low (indicating there are few cells in the catchment",
  "area).\u00a0 You can bring out a little more definition if you play with the sym-",
  "bolization, but in general it is rare that you will put a flow accumulation",
  "raster into a published map.",
];

const EXERCISE = [
  "For this exercise, I will symbolize the Flow Accumulation raster using",
  "“Stretched” values while equalizing the histogram:",
];

function WordWindow() {
  return (
    <div className="flex min-w-0 flex-[520] flex-col bg-white font-[Lato,'Open_Sans',sans-serif]">
      <header className="flex h-5 shrink-0 items-center bg-[#2b579a] text-[8px] text-[#b9cdea]">
        <nav className="flex items-center gap-6 pl-3 font-bold text-white">
          <button className="font-normal text-[#0c1c36]">File</button>
          <button>Tools</button>
          <button>View</button>
        </nav>
        <button className="ml-auto flex items-center gap-1 whitespace-nowrap">
          FOR_525_Watershed_GIS_Lab_Exercises.docx • Saved to this PC
          <Caret className="size-[7px]" />
        </button>
        <button aria-label="Ribbon display options" className="ml-5 flex w-8 justify-center">
          <svg viewBox="0 0 16 16" className="size-[10px]" fill="none" stroke="currentColor" strokeWidth="1.500">
            <path d="M4 4h8v8H4zM1 4V1h3M12 1h3v3M15 12v3h-3M4 15H1v-3" />
          </svg>
        </button>
        <button aria-label="Minimize" className="flex w-[31px] justify-center">
          <Minus className="size-[9px]" />
        </button>
        <button aria-label="Maximize" className="flex w-[31px] justify-center">
          <Square className="size-2" />
        </button>
        <button aria-label="Close" className="flex w-[31px] justify-center">
          <X className="size-[11px]" />
        </button>
      </header>

      <div className="flex min-h-0 flex-1 pr-[10px] pl-[11px]">
        <button
          aria-label="Previous screen"
          className="mb-3 flex size-[26px] shrink-0 items-center justify-center self-center rounded-full border-2 border-neutral-400"
        >
          <span className="border-y-4 border-r-6 border-y-transparent border-r-neutral-400" />
        </button>
        <article className="mr-[15px] ml-[17px] min-w-0 flex-1 pt-[30px]">
          <Figure />
          <div className="mt-[14px] flex text-black">
            <span className="mt-[4px] ml-[7px] size-[9px] shrink-0 border border-neutral-700" />
            <div className="ml-[6px] flex-1 space-y-1 text-[12px] leading-[18px]">
              <Paragraph lines={ACCUMULATION} />
              <Paragraph lines={EXERCISE} />
            </div>
          </div>
        </article>
        <button
          aria-label="Next screen"
          className="mb-3 flex size-[26px] shrink-0 items-center justify-center self-center rounded-full border-2 border-[#9db7dc]"
        >
          <span className="border-y-5 border-l-6 border-y-transparent border-l-[#7fa1d1]" />
        </button>
      </div>

      <footer className="flex h-[15px] shrink-0 items-center border-t border-neutral-300 bg-[#f3f3f3] pl-[6px] text-[8px] text-neutral-600">
        <span>Screen 44 of 88</span>
        <svg viewBox="0 0 20 16" className="ml-3 h-2 w-[10px]" fill="none" stroke="#555" strokeWidth="1.500">
          <path d="M1 2h18v12H1zM1 5h18M4 8h4" />
          <circle cx="12" cy="10" r="3" />
        </svg>
        <button className="ml-auto flex items-center gap-[2px]">
          <svg viewBox="0 0 16 16" className="size-[9px]" fill="none" stroke="#555" strokeWidth="1.500">
            <path d="M5 3h4l3 3v7H5zM1 4V1h3M15 12v3h-3M4 15H1v-3" />
          </svg>
          Focus
        </button>
        <button aria-label="Read mode" className="ml-2 flex h-full w-[26px] items-center justify-center bg-neutral-300">
          <svg viewBox="0 0 16 16" className="size-[9px]" fill="none" stroke="#444" strokeWidth="1.500">
            <path d="M1 2h14v12H1zM8 1v14M3 5h3M3 8h3M3 11h3M10 5h3M10 8h3M10 11h3" />
          </svg>
        </button>
        <button aria-label="Print layout" className="flex w-[27px] justify-center">
          <svg viewBox="0 0 16 16" className="size-[9px]" fill="none" stroke="#555" strokeWidth="1.500">
            <path d="M2 1h12v14H2zM5 5h6M5 8h6M5 11h6" />
          </svg>
        </button>
        <button aria-label="Web layout" className="flex w-[27px] justify-center">
          <svg viewBox="0 0 16 16" className="size-[9px]" fill="none" stroke="#555" strokeWidth="1.500">
            <path d="M1 1h14v5M1 1v13h6M1 4h14M4 7h4" />
            <circle cx="11" cy="11" r="3.500" fill="#555" />
          </svg>
        </button>
        <label className="ml-1 flex items-center gap-[3px]">
          −
          <input
            type="range"
            aria-label="Zoom"
            min="0"
            max="100"
            defaultValue="20"
            className="h-2 w-[66px] appearance-none bg-transparent [&::-webkit-slider-runnable-track]:h-px [&::-webkit-slider-runnable-track]:bg-neutral-500 [&::-webkit-slider-thumb]:-mt-[3px] [&::-webkit-slider-thumb]:h-[7px] [&::-webkit-slider-thumb]:w-[3px] [&::-webkit-slider-thumb]:appearance-none [&::-webkit-slider-thumb]:bg-neutral-800"
          />
          +
        </label>
        <span className="mr-3 ml-2">140%</span>
      </footer>
    </div>
  );
}

export default function App() {
  return (
    <div className="relative flex h-screen min-h-[480px] overflow-hidden bg-linear-to-b from-[#141c2f] to-[#7a4a35] pt-[2px] pr-[3px] pb-[2px] pl-[2px]">
      <ArcGisWindow />
      <WordWindow />
      <svg viewBox="0 0 16 24" className="absolute top-[355px] -right-2 h-6 w-4" fill="#fff" stroke="#000" strokeWidth="1.500">
        <path d="M1 1v19l4-4 3 7 3-1-3-7h6z" />
      </svg>
    </div>
  );
}
